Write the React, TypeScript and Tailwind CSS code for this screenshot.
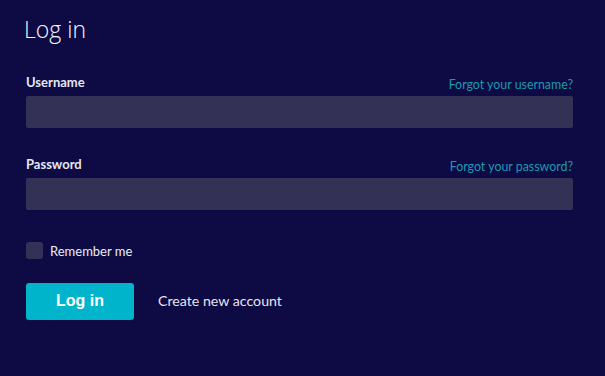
export default function App() {
  return (
    <div className="min-h-[376px] w-full bg-[#0d0a44] px-[26px] pt-[14px] text-white" style={{ fontFamily: 'Lato, "Noto Sans", sans-serif' }}>
      <h1 className="-ml-[2px] text-[23px] font-light leading-[30px] text-[#f7f7fc]" style={{ fontFamily: '"Open Sans", sans-serif' }}>
        Log in
      </h1>

      <form className="mt-[30px] w-[547px]" onSubmit={(e) => e.preventDefault()}>
        <div className="flex items-end justify-between">
          <label className="text-[13px] font-bold leading-[16px] text-[#e6e6f2]">Username</label>
          <a href="#" className="translate-y-[3px] text-[12.4px] leading-[16px] text-[#1a9bb0]">
            Forgot your username?
          </a>
        </div>
        <input className="mt-[6px] block h-[32px] w-full rounded-[2px] bg-[#333256] outline-none" />

        <div className="mt-[28px] flex items-end justify-between">
          <label className="text-[13px] font-bold leading-[16px] text-[#e6e6f2]">Password</label>
          <a href="#" className="translate-y-[3px] text-[12.4px] leading-[16px] text-[#1a9bb0]">
            Forgot your password?
          </a>
        </div>
        <input type="password" className="mt-[6px] block h-[32px] w-full rounded-[2px] bg-[#333256] outline-none" />

        <label className="mt-[30px] flex items-center gap-[7px]">
          <span className="block h-[17px] w-[17px] rounded-[3px] bg-[#333256]" />
          <span className="mt-[2px] text-[13px] font-normal text-[#ececf6]">Remember me</span>
        </label>

        <div className="mt-[21px] flex items-center gap-[24px]">
          <button
            type="submit"
            className="h-[37px] w-[108px] rounded-[3px] bg-[#00b4cc] text-[16px] font-bold text-white"
            style={{ fontFamily: '"Liberation Sans", Arial, sans-serif' }}
          >
            Log in
          </button>
          <a href="#" className="text-[14.2px] text-[#e6e6f2]">
            Create new account
          </a>
        </div>
      </form>
    </div>
  )
}
